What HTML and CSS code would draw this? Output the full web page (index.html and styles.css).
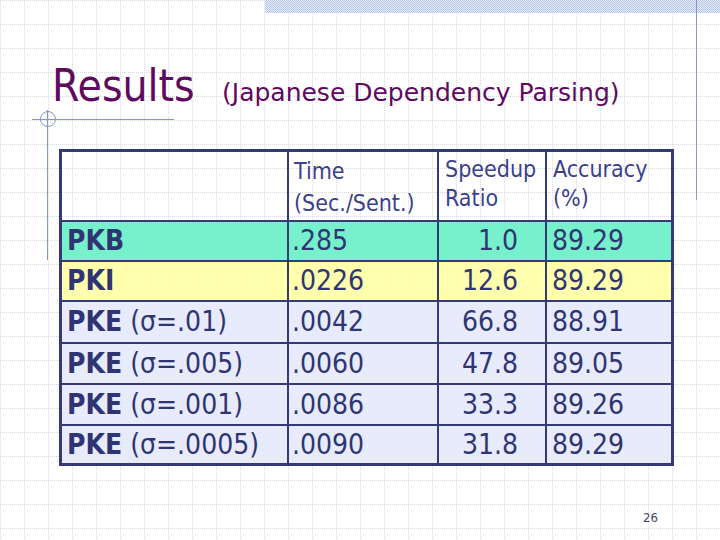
FILE: index.html
```html
<!DOCTYPE html>
<html lang="en">
<head>
<meta charset="utf-8">
<title>Results (Japanese Dependency Parsing)</title>
<link rel="stylesheet" href="styles.css">
</head>
<body>
<div class="slide">
  <div class="deco band"></div>
  <div class="deco vline-right"></div>
  <div class="deco vline-left"></div>
  <div class="deco hline"></div>
  <div class="deco ring"></div>

  <header class="title-row">
    <h1 class="title">Results</h1>
    <span class="subtitle">(Japanese Dependency Parsing)</span>
  </header>

  <table class="results">
    <tr class="r-head">
      <td class="c1"></td>
      <td class="c2 h-time">Time<br>(Sec./Sent.)</td>
      <td class="c3 h-ratio">Speedup<br>Ratio</td>
      <td class="c4 h-ratio">Accuracy<br>(%)</td>
    </tr>
    <tr class="r-pkb r-40">
      <td class="name"><b>PKB</b></td>
      <td class="time">.285</td>
      <td class="ratio">1.0</td>
      <td class="acc">89.29</td>
    </tr>
    <tr class="r-pki r-40">
      <td class="name"><b>PKI</b></td>
      <td class="time">.0226</td>
      <td class="ratio">12.6</td>
      <td class="acc">89.29</td>
    </tr>
    <tr class="r-pke r-42">
      <td class="name"><b>PKE</b> (σ=.01)</td>
      <td class="time">.0042</td>
      <td class="ratio">66.8</td>
      <td class="acc">88.91</td>
    </tr>
    <tr class="r-pke r-41">
      <td class="name"><b>PKE</b> (σ=.005)</td>
      <td class="time">.0060</td>
      <td class="ratio">47.8</td>
      <td class="acc">89.05</td>
    </tr>
    <tr class="r-pke r-41">
      <td class="name"><b>PKE</b> (σ=.001)</td>
      <td class="time">.0086</td>
      <td class="ratio">33.3</td>
      <td class="acc">89.26</td>
    </tr>
    <tr class="r-pke r-last">
      <td class="name"><b>PKE</b> (σ=.0005)</td>
      <td class="time">.0090</td>
      <td class="ratio">31.8</td>
      <td class="acc">89.29</td>
    </tr>
  </table>

  <footer class="page-num">26</footer>
</div>
</body>
</html>
```

FILE: styles.css
```css
html, body {
  margin: 0;
  padding: 0;
}

body {
  width: 720px;
  height: 540px;
  overflow: hidden;
  font-family: "DejaVu Sans Condensed", "DejaVu Sans", sans-serif;
  font-stretch: condensed;
}

.slide {
  position: relative;
  width: 720px;
  height: 540px;
  box-sizing: border-box;
  display: flex;
  flex-direction: column;
  background:
    conic-gradient(at 1px 1px, transparent 270deg, #d6d7df 0) 0 0 / 24px 2px,
    conic-gradient(at 1px 1px, transparent 270deg, #d6d7df 0) 0 0 / 2px 24px,
    #ffffff;
}

/* decorative template graphics */
.deco {
  position: absolute;
}

.band {
  left: 265px;
  top: 0;
  width: 455px;
  height: 13px;
  background: repeating-conic-gradient(#b6c5e8 0 25%, #e6ebf8 0 50%) 0 0 / 2px 2px;
}

.vline-right {
  left: 696px;
  top: 0;
  width: 1px;
  height: 200px;
  background: #8595c9;
}

.vline-left {
  left: 47px;
  top: 110px;
  width: 1px;
  height: 150px;
  background: #8595c9;
}

.hline {
  left: 32px;
  top: 119px;
  width: 142px;
  height: 1px;
  background: #8595c9;
}

.ring {
  left: 40px;
  top: 111px;
  width: 14px;
  height: 14px;
  border: 1px solid #8595c9;
  border-radius: 50%;
}

/* title */
.title-row {
  display: flex;
  align-items: baseline;
  margin-top: 60px;
  padding-left: 52px;
  color: #5e0a5e;
  position: relative;
}

.title {
  margin: 0;
  width: 170px;
  font-size: 44px;
  font-weight: normal;
  line-height: 52px;
}

.subtitle {
  font-family: "DejaVu Sans", sans-serif;
  font-stretch: normal;
  font-size: 25px;
  line-height: 30px;
}

/* table */
.results {
  margin-top: 37px;
  margin-left: 59px;
  width: 615px;
  table-layout: fixed;
  border-collapse: separate;
  border-spacing: 0;
  border: 3px solid #363a74;
  color: #2f3573;
  font-size: 28px;
  position: relative;
}

.results td {
  box-sizing: border-box;
  border-right: 2px solid #363a74;
  border-bottom: 2px solid #363a74;
  padding: 0;
  vertical-align: middle;
  white-space: nowrap;
  line-height: 32px;
}

.results td:last-child {
  border-right: none;
}

.results tr.r-last td {
  border-bottom: none;
}

.c1 { width: 227px; }
.c2 { width: 150px; }
.c3 { width: 108px; }
.c4 { width: 124px; }

.r-head td {
  height: 70px;
  vertical-align: top;
  font-size: 23px;
  color: #3b3f8c;
  padding-left: 5px;
  padding-top: 3px;
}

.r-head td.h-time {
  line-height: 32px;
}

.r-head td.h-ratio {
  line-height: 29px;
  padding-left: 6px;
}

.r-40 td { height: 40px; }
.r-42 td { height: 42px; }
.r-41 td { height: 41px; }
.r-last td { height: 37px; }

.r-pkb td { background: rgba(104, 240, 198, 0.9); }
.r-pki td { background: rgba(255, 255, 164, 0.9); }
.r-pke td { background: rgba(228, 233, 251, 0.9); }

.name {
  padding-left: 5px !important;
}

.name b {
  font-weight: bold;
}

.time {
  padding-left: 3px !important;
}

.ratio {
  text-align: right;
  padding-right: 27px !important;
}

.acc {
  padding-left: 5px !important;
}

/* page number */
.page-num {
  margin-top: auto;
  padding-right: 62px;
  padding-bottom: 14px;
  text-align: right;
  font-size: 13px;
  line-height: 16px;
  color: #40426a;
}
```
